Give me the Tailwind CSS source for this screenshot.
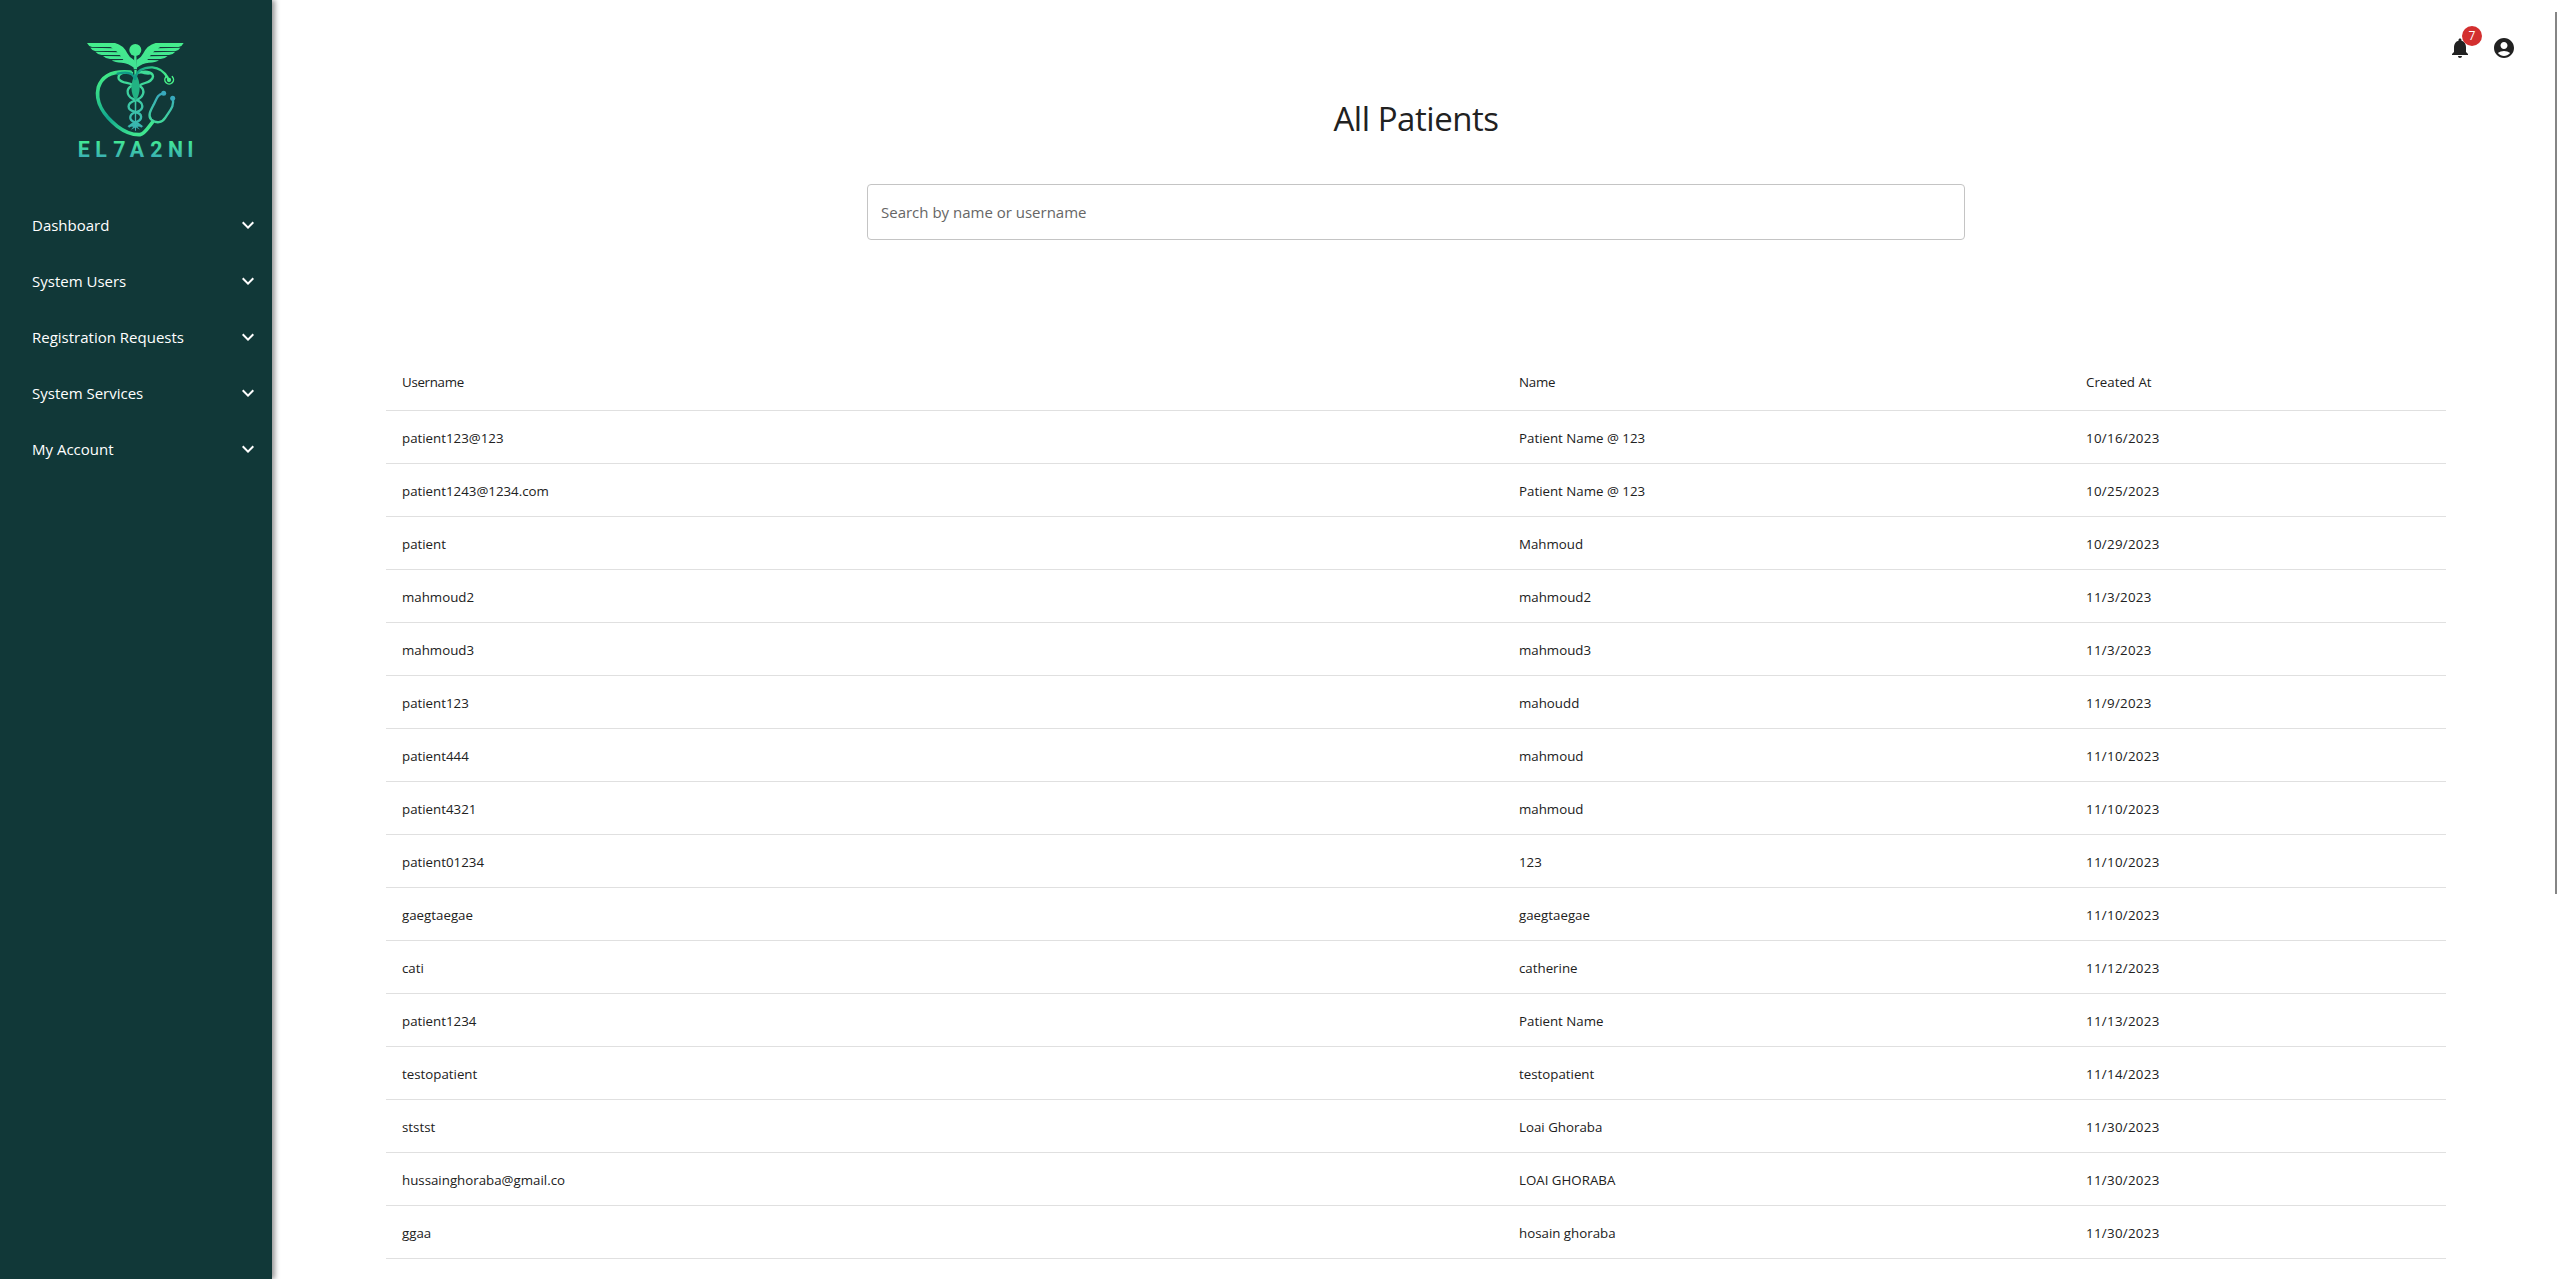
<!DOCTYPE html>
<html lang="en">
<head>
<meta charset="utf-8">
<title>All Patients</title>
<script src="https://cdn.jsdelivr.net/npm/@tailwindcss/browser@4"></script>
</head>
<body class="relative flex h-[1279px] overflow-hidden bg-white font-['Open_Sans',sans-serif] text-[#212121]">
<aside class="flex w-[272px] shrink-0 flex-col bg-[#113838] shadow-[3px_0_5px_rgba(0,0,0,0.4)]">
  <svg class="mt-[30px] ml-[60px] h-[140px] w-[150px] shrink-0" viewBox="0 0 450 420" fill="none" stroke-linecap="round">
    <defs>
      <linearGradient id="g" gradientUnits="userSpaceOnUse" x1="0" y1="40" x2="0" y2="310"><stop offset="0" stop-color="#45ee8c"/><stop offset=".4" stop-color="#3fdc98"/><stop offset="1" stop-color="#38afb4"/></linearGradient>
      <linearGradient id="h" gradientUnits="userSpaceOnUse" x1="110" y1="150" x2="230" y2="310"><stop offset="0" stop-color="#42ea87"/><stop offset=".55" stop-color="#12a88f"/><stop offset="1" stop-color="#3fe58f"/></linearGradient>
      <linearGradient id="k" gradientUnits="userSpaceOnUse" x1="225" y1="0" x2="330" y2="0"><stop offset="0" stop-color="#0f9a86"/><stop offset="1" stop-color="#48f28a"/></linearGradient>
      <linearGradient id="s" gradientUnits="userSpaceOnUse" x1="0" y1="190" x2="0" y2="310"><stop offset="0" stop-color="#38a9bd"/><stop offset="1" stop-color="#45e98d"/></linearGradient>
      <linearGradient id="t" gradientUnits="userSpaceOnUse" x1="0" y1="335" x2="0" y2="380"><stop offset="0" stop-color="#42e795"/><stop offset="1" stop-color="#3bb3b2"/></linearGradient>
    </defs>
    <g fill="url(#g)">
      <circle cx="226" cy="60" r="18"/>
      <path d="M81 39H165Q190 45 202 70Q208 83 222 90L223 114Q205 99 185 98Q165 98 155 91L190 90L188 87H150Q137 86 129 78L183 79L179 75H125Q112 73 106 65L173 67L168 63H105Q95 60 91 53L158 55L151 51H96Q85 48 81 39Z"/>
      <path d="M371 39H287Q262 45 250 70Q244 83 230 90L229 114Q247 99 267 98Q287 98 297 91L262 90L264 87H302Q315 86 323 78L269 79L273 75H327Q340 73 346 65L279 67L284 63H347Q357 60 361 53L294 55L301 51H356Q367 48 371 39Z"/>
      <path d="M223 75H229L231 118H221Z"/>
      <path d="M223 120H230L228 302H225Z"/>
      <path d="M201 289L226 281L251 289L232 290L240 299L227 292L213 299L220 290Z"/>
    </g>
    <g stroke="url(#g)" stroke-width="7">
      <path d="M216 129C194 123 172 131 176 146C182 160 205 157 217 164"/>
      <path d="M236 128C252 124 277 122 279 139C278 157 254 157 241 165"/>
      <path d="M213 169C195 181 202 203 226 209C253 217 254 239 229 246C206 252 205 270 225 277C234 281 240 284 244 289"/>
      <path d="M240 169C258 181 251 203 226 211C199 220 199 240 226 246C248 251 250 269 227 277C218 281 212 284 208 289"/>
    </g>
    <path d="M242 129Q262 115 278 133Q256 137 242 129Z" fill="#3fdc98"/>
    <path d="M227 132C243 155 243 190 227 213C210 190 210 155 227 132Z" fill="#22b283"/>
    <path d="M211 126C165 122 128 132 115 172C104 217 134 259 172 289C193 305 218 315 240 314C255 311 264 293 277 277" stroke="url(#h)" stroke-width="11"/>
    <path d="M173 131C205 123 221 130 226 150C227 122 250 111 277 112C302 114 315 129 323 143" stroke="url(#k)" stroke-width="7"/>
    <circle cx="327" cy="150" r="6.5" fill="#48f28a"/>
    <path d="M318 140A13 13 0 1 0 337 140" stroke="#48f28a" stroke-width="4.500"/>
    <path d="M310 191C293 192 290 206 281 224C272 241 262 258 274 269C289 281 306 279 316 263C328 243 345 228 338 206" stroke="url(#s)" stroke-width="7"/>
    <circle cx="311" cy="190" r="7.500" fill="#38a9bd"/>
    <circle cx="338" cy="205" r="7.500" fill="#38a9bd"/>
    <text x="53 106 160 209 271 324 382" y="380" fill="url(#t)" class="font-['Roboto',sans-serif] text-[64px] font-bold">EL7A2NI</text>
  </svg>
  <nav id="nav" class="mt-[27px] flex flex-col text-[15px] text-white"></nav>
</aside>
<main class="flex flex-1 flex-col">
  <header class="flex h-[95px] items-start justify-end gap-5 pt-9 pr-11">
    <div class="relative size-6">
      <svg class="size-6" viewBox="0 0 24 24" fill="#212121"><path d="M12 22c1.100 0 2-.9 2-2h-4c0 1.100.89 2 2 2zm6-6v-5c0-3.070-1.640-5.640-4.500-6.320V4c0-.83-.67-1.500-1.500-1.500s-1.500.67-1.500 1.500v.68C7.630 5.360 6 7.920 6 11v5l-2 2v1h16v-1l-2-2z"/></svg>
      <span class="absolute -top-2.5 left-3.5 flex size-5 items-center justify-center rounded-full bg-[#d32f2f] text-xs text-white">7</span>
    </div>
    <svg class="size-6" viewBox="0 0 24 24" fill="#212121"><path d="M12 2C6.480 2 2 6.480 2 12s4.480 10 10 10 10-4.480 10-10S17.520 2 12 2zm0 4c1.930 0 3.500 1.570 3.500 3.500S13.930 13 12 13s-3.500-1.570-3.500-3.500S10.070 6 12 6zm0 14c-2.030 0-4.430-.82-6.140-2.880C7.550 15.800 9.680 15 12 15s4.450.8 6.140 2.120C16.430 19.180 14.030 20 12 20z"/></svg>
  </header>
  <h1 class="h-[89px] text-center text-[33px] leading-[48px] tracking-[-0.45px]">All Patients</h1>
  <div class="mx-auto flex h-14 w-[1098px] items-center rounded border border-[#c4c4c4] px-[13px] text-[15px] text-[#666]">Search by name or username</div>
  <table class="mt-[113px] ml-[114px] w-[2060px] table-fixed border-separate border-spacing-0 text-left text-[13.3px]">
    <thead><tr>
      <th class="h-[58px] w-[1117px] border-b border-[#e0e0e0] px-4 pt-[3px] font-normal tracking-[-0.3px]">Username</th>
      <th class="w-[567px] border-b border-[#e0e0e0] px-4 pt-[3px] font-normal tracking-[-0.2px]">Name</th>
      <th class="w-[376px] border-b border-[#e0e0e0] px-4 pt-[3px] font-normal">Created At</th>
    </tr></thead>
    <tbody id="rows"></tbody>
  </table>
</main>
<div class="absolute top-3 left-[2555px] h-[882px] w-0.5 bg-[#858585]"></div>
<script>
document.getElementById('nav').innerHTML = ['Dashboard', 'System Users', 'Registration Requests', 'System Services', 'My Account'].map(t =>
  `<div class="flex h-14 items-center justify-between pr-3 pl-8"><span>${t}</span><svg class="size-6" viewBox="0 0 24 24" fill="#fff"><path d="M7.410 8.590 12 13.170l4.590-4.580L18 10l-6 6-6-6 1.410-1.410z"/></svg></div>`).join('');
const patients = [
  ['patient123@123', 'Patient Name @ 123', '10/16/2023'],
  ['patient1243@1234.com', 'Patient Name @ 123', '10/25/2023'],
  ['patient', 'Mahmoud', '10/29/2023'],
  ['mahmoud2', 'mahmoud2', '11/3/2023'],
  ['mahmoud3', 'mahmoud3', '11/3/2023'],
  ['patient123', 'mahoudd', '11/9/2023'],
  ['patient444', 'mahmoud', '11/10/2023'],
  ['patient4321', 'mahmoud', '11/10/2023'],
  ['patient01234', '123', '11/10/2023'],
  ['gaegtaegae', 'gaegtaegae', '11/10/2023'],
  ['cati', 'catherine', '11/12/2023'],
  ['patient1234', 'Patient Name', '11/13/2023'],
  ['testopatient', 'testopatient', '11/14/2023'],
  ['ststst', 'Loai Ghoraba', '11/30/2023'],
  ['hussainghoraba@gmail.co', 'LOAI GHORABA', '11/30/2023'],
  ['ggaa', 'hosain ghoraba', '11/30/2023']
];
document.getElementById('rows').innerHTML = patients.map(([u, n, d]) =>
  `<tr><td class="h-[53px] border-b border-[#e0e0e0] px-4 pt-[3px]">${u}</td><td class="border-b border-[#e0e0e0] px-4 pt-[3px]">${n}</td><td class="border-b border-[#e0e0e0] px-4 pt-[3px] tracking-[0.3px]">${d}</td></tr>`).join('');
</script>
</body>
</html>
